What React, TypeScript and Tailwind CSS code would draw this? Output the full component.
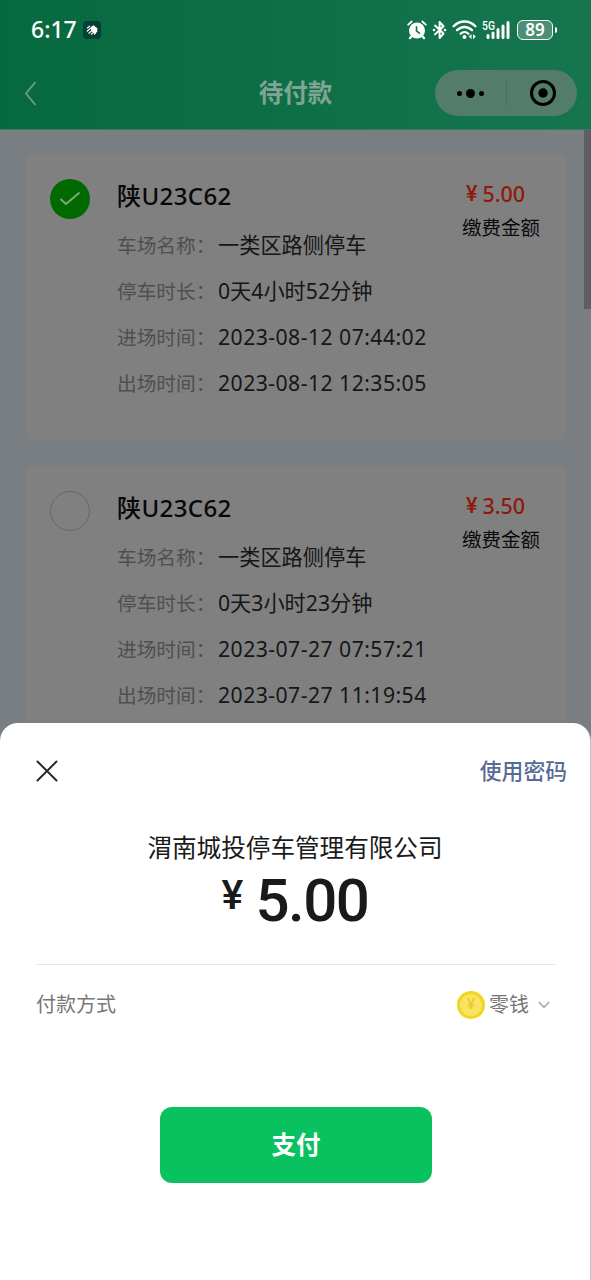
type Order = {
  id: number;
  plate: string;
  amount: string;
  checked: boolean;
  rows: { label: string; value: string; wide?: boolean }[];
};

const orders: Order[] = [
  {
    id: 1,
    plate: "陕U23C62",
    amount: "5.00",
    checked: true,
    rows: [
      { label: "车场名称", value: "一类区路侧停车" },
      { label: "停车时长", value: "0天4小时52分钟" },
      { label: "进场时间", value: "2023-08-12 07:44:02", wide: true },
      { label: "出场时间", value: "2023-08-12 12:35:05", wide: true },
    ],
  },
  {
    id: 2,
    plate: "陕U23C62",
    amount: "3.50",
    checked: false,
    rows: [
      { label: "车场名称", value: "一类区路侧停车" },
      { label: "停车时长", value: "0天3小时23分钟" },
      { label: "进场时间", value: "2023-07-27 07:57:21", wide: true },
      { label: "出场时间", value: "2023-07-27 11:19:54", wide: true },
    ],
  },
];

function StatusBar() {
  return (
    <div className="flex h-[58px] items-center justify-between pt-px pr-[34px] pl-[31px] text-white">
      <div className="flex items-center gap-[6px]">
        <span className="text-[23px] leading-none font-medium">6:17</span>
        <span className="flex h-[18px] w-[18px] items-center justify-center rounded-[4px] bg-[#053f36]">
          <svg width="14" height="14" viewBox="0 0 14 14" fill="none">
            <path d="M5.500 4.200 8.500 2.200l3.800 3v3.500L10 10.500 6.800 8.500Z" fill="white" />
            <path d="m2 5.300 3-2.300M1.800 8.500l4-3.500M3.500 10.500l4-3.500M6 11.500l3.500-3M9 11.500l2-1.800" stroke="white" strokeWidth="1.100" />
          </svg>
        </span>
      </div>

      <div className="flex items-center">
        {/* alarm */}
        <svg width="20" height="20" viewBox="0 0 20 20" fill="none">
          <circle cx="10" cy="10.500" r="8" fill="white" />
          <path d="M1.200 4.700 4.700 1.500M18.800 4.700l-3.500-3.200" stroke="white" strokeWidth="1.800" strokeLinecap="round" />
          <path d="m4.600 16.200-1.700 2M15.400 16.200l1.700 2" stroke="white" strokeWidth="2.200" strokeLinecap="round" />
          <path d="M9.500 6.300v4.500l3.400 2.800" stroke="#116f49" strokeWidth="1.600" />
        </svg>
        {/* bluetooth */}
        <svg className="ml-[5px]" width="15" height="20" viewBox="0 0 15 20" fill="none">
          <path d="m3 5.600 8.500 8L7.600 18V2l3.900 4.200L3 14.400" stroke="white" strokeWidth="2" strokeLinejoin="round" strokeLinecap="round" />
          <circle cx="2" cy="10" r="1.300" fill="white" />
          <circle cx="13" cy="10" r="1.300" fill="white" />
        </svg>
        {/* wifi */}
        <svg className="ml-[5px]" width="25" height="20" viewBox="0 0 25 20" fill="none">
          <path d="M1.600 6.200C8-.1 17-.1 23.400 6.200" stroke="white" strokeWidth="2.300" strokeLinecap="round" />
          <path d="M5 10.200c4.500-4.300 10.500-4.300 15 0" stroke="white" strokeWidth="2.300" strokeLinecap="round" />
          <path d="M8.600 13.800c2.300-2.200 5.500-2.200 7.800 0" stroke="white" strokeWidth="2.200" strokeLinecap="round" />
          <circle cx="12.500" cy="17" r="2" fill="white" />
          <path d="m19.500 14-2.800 2.600 2.800 2.600ZM21 14l2.800 2.600L21 19.200Z" fill="white" />
        </svg>
        {/* 5G signal */}
        <div className="relative ml-[5px] h-5 w-7">
          <span className="absolute top-[-1px] left-0 origin-left scale-x-80 font-[Roboto] text-[13px] leading-[13px] font-medium">
            5G
          </span>
          <svg width="28" height="20" viewBox="0 0 28 20" stroke="white" strokeWidth="3" strokeLinecap="round">
            <path d="M6 15.500v2M11 13v4.500M16 9.500v8M21 6v11.500M26 2.500v15" />
          </svg>
        </div>
        {/* battery */}
        <div className="ml-[7px] flex h-5 w-9 items-center justify-center rounded-[6px] border-[1.500px] border-white bg-[#4a9074] text-[17px] leading-none font-semibold">
          89
        </div>
        <div className="ml-[2px] h-[6px] w-[2px] rounded-r bg-white" />
      </div>
    </div>
  );
}

function NavBar() {
  return (
    <div className="grid h-[71px] grid-cols-[1fr_auto_1fr] items-center px-[14px] pb-px">
      <svg className="ml-[10px]" width="13" height="25" viewBox="0 0 13 25" fill="none">
        <path d="M11.500 1 2 12.500l9.500 11.500" stroke="#6f9f87" strokeWidth="1.800" />
      </svg>
      <h1 className="text-[24.500px] leading-none font-bold text-[#80a494]">待付款</h1>
      <div className="flex h-[46px] w-[142px] items-center justify-self-end rounded-full bg-[#547c6b]">
        <div className="flex w-[71px] items-center justify-center gap-1">
          <i className="h-[5px] w-[5px] rounded-full bg-black" />
          <i className="h-[9px] w-[9px] rounded-full bg-black" />
          <i className="h-[5px] w-[5px] rounded-full bg-black" />
        </div>
        <div className="h-7 w-px bg-[#4b7060]" />
        <div className="flex flex-1 justify-center pl-px">
          <svg width="28" height="28" viewBox="0 0 28 28" fill="none">
            <circle cx="14" cy="14" r="11.500" stroke="black" strokeWidth="3" />
            <circle cx="14" cy="14" r="4.700" fill="black" />
          </svg>
        </div>
      </div>
    </div>
  );
}

function OrderCard({ order }: { order: Order }) {
  return (
    <div className="flex h-[287px] shrink-0 rounded-[6px] bg-[#808080] pt-6 pr-[26px] pl-6">
      {order.checked ? (
        <div className="mt-px flex h-10 w-10 items-center justify-center rounded-full bg-[#006a00]">
          <svg width="22" height="16" viewBox="0 0 22 16" fill="none">
            <path d="m1.500 8 5.500 5L20.500 1.500" stroke="#80a880" strokeWidth="1.900" />
          </svg>
        </div>
      ) : (
        <div className="mt-px h-10 w-10 rounded-full border-[1.500px] border-[#676767]" />
      )}

      <div className="ml-[27px] flex-1">
        <h2 className="h-11 pt-[6px] text-[24px] leading-[24px] font-medium tracking-[0.400px] text-[#080808]">
          {order.plate}
        </h2>
        {order.rows.map((row) => (
          <div key={row.label} className="flex h-[46px] items-center whitespace-nowrap">
            <span className="w-[101px] pt-[2px] text-[19.700px] leading-none text-[#4f4f4f]">
              {row.label}：
            </span>
            <span
              className={`text-[21.200px] leading-none text-[#161616] ${row.wide ? "tracking-[0.450px]" : ""}`}
            >
              {row.value}
            </span>
          </div>
        ))}
      </div>

      <div className="w-[78px] shrink-0">
        <p className="flex h-[31px] items-center gap-[5px] pl-1 text-[21.500px] leading-none font-medium whitespace-nowrap text-[#90190d]">
          <span className="font-[Roboto]">¥</span>
          {order.amount}
        </p>
        <p className="mt-[9px] text-[19.500px] leading-none text-[#0b0b0b]">缴费金额</p>
      </div>
    </div>
  );
}

function PaySheet() {
  return (
    <div className="flex h-[557px] flex-col rounded-t-[18px] border-r border-[#c4c4c4] bg-white">
      <div className="flex h-[96px] items-center justify-between pr-[23px] pl-9">
        <svg width="22" height="22" viewBox="0 0 22 22" fill="none">
          <path d="m1.500 1.500 19 19M20.500 1.500l-19 19" stroke="#292929" strokeWidth="2" strokeLinecap="round" />
        </svg>
        <span className="text-[21.800px] leading-none font-medium text-[#576b95]">使用密码</span>
      </div>

      <div className="flex flex-col items-center pt-4">
        <p className="text-[24.600px] leading-[25px] text-[#1a1a1a]">渭南城投停车管理有限公司</p>
        <p className="mt-[11px] flex h-[64px] items-start font-[Roboto] leading-none font-medium text-[#1a1a1a]">
          <span className="pt-1 text-[41px]">¥</span>
          <span className="ml-3 text-[60px] tracking-[-1.500px]">5.00</span>
        </p>
      </div>

      <div className="mt-[29px] mr-[35px] ml-9 flex h-[80px] items-center justify-between border-t border-[#e6e6e6] text-[20px] leading-none text-[#777777]">
        <span>付款方式</span>
        <div className="flex items-center pr-[5px]">
          <span className="mr-1 flex h-7 w-7 items-center justify-center rounded-full border-[3px] border-[#f3d51d] bg-[#f9e264] font-[Roboto] text-[15px] text-[#e9c61d]">
            ¥
          </span>
          零钱
          <svg className="ml-[9px]" width="12" height="8" viewBox="0 0 12 8" fill="none">
            <path d="m.8 1 5.200 5.300L11.200 1" stroke="#aaaaaa" strokeWidth="1.700" />
          </svg>
        </div>
      </div>

      <button className="mt-[63px] ml-[160px] h-[76px] w-[272px] rounded-[12px] bg-[#0ac160] pt-px text-[24.500px] leading-none font-bold text-white">
        支付
      </button>
    </div>
  );
}

export default function App() {
  return (
    <div
      lang="zh-CN"
      className="h-[1280px] w-[591px] overflow-hidden bg-[#787e82] font-['Noto_Sans','Noto_Sans_CJK_SC',sans-serif]"
    >
      <header className="h-[130px] border-b border-[#42765f] bg-linear-to-r from-[#07693f] to-[#14754f]">
        <StatusBar />
        <NavBar />
      </header>

      <main className="flex h-[593px] justify-between overflow-hidden">
        <div className="ml-[26px] flex w-[540px] flex-col gap-[25px] pt-6">
          {orders.map((order) => (
            <OrderCard key={order.id} order={order} />
          ))}
        </div>
        <div className="h-[179px] w-[7px] bg-[#5c5f61]" />
      </main>

      <PaySheet />
    </div>
  );
}
